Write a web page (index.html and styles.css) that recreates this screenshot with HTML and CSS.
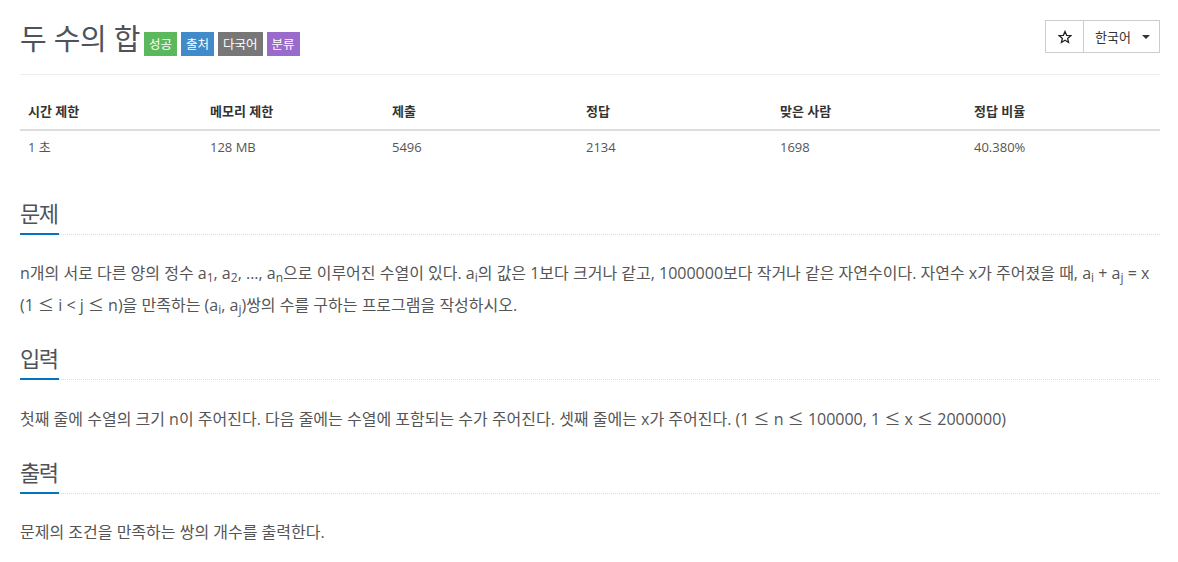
FILE: index.html
```html
<!DOCTYPE html>
<html lang="ko">
<head>
<meta charset="utf-8">
<title>두 수의 합</title>
<link rel="stylesheet" href="styles.css">
</head>
<body>
<div class="container">
  <header class="page-header">
    <div class="title-wrap">
      <h1 class="title">두 수의 합</h1>
      <div class="labels">
        <span class="label label-success">성공</span>
        <span class="label label-info">출처</span>
        <span class="label label-gray">다국어</span>
        <span class="label label-purple">분류</span>
      </div>
    </div>
    <div class="btn-group">
      <button class="btn btn-star" type="button" aria-label="즐겨찾기">
        <svg width="14" height="14" viewBox="0 0 24 24" aria-hidden="true"><path d="M12 2.5l2.8 6.6 7.1.6-5.4 4.7 1.6 7-6.1-3.7-6.1 3.7 1.6-7-5.4-4.7 7.1-.6z" fill="none" stroke="#222" stroke-width="2.2" stroke-linejoin="miter"/></svg>
      </button>
      <button class="btn btn-lang" type="button">한국어 <span class="caret"></span></button>
    </div>
  </header>

  <table class="info-table">
    <thead>
      <tr>
        <th class="col-narrow">시간 제한</th>
        <th class="col-narrow">메모리 제한</th>
        <th>제출</th>
        <th>정답</th>
        <th>맞은 사람</th>
        <th>정답 비율</th>
      </tr>
    </thead>
    <tbody>
      <tr>
        <td>1 초</td>
        <td>128 MB</td>
        <td>5496</td>
        <td>2134</td>
        <td>1698</td>
        <td>40.380%</td>
      </tr>
    </tbody>
  </table>

  <section class="section">
    <h2 class="headline"><span>문제</span></h2>
    <p class="text">n개의 서로 다른 양의 정수 a<sub>1</sub>, a<sub>2</sub>, ..., a<sub>n</sub>으로 이루어진 수열이 있다. a<sub>i</sub>의 값은 1보다 크거나 같고, 1000000보다 작거나 같은 자연수이다. 자연수 x가 주어졌을 때, a<sub>i</sub> + a<sub>j</sub> = x <span class="nowrap">(1 <span class="le">≤</span> i &lt; j <span class="le">≤</span> n)을</span> 만족하는 (a<sub>i</sub>, a<sub>j</sub>)쌍의 수를 구하는 프로그램을 작성하시오.</p>
  </section>

  <section class="section">
    <h2 class="headline"><span>입력</span></h2>
    <p class="text">첫째 줄에 수열의 크기 n이 주어진다. 다음 줄에는 수열에 포함되는 수가 주어진다. 셋째 줄에는 x가 주어진다. (1 <span class="le">≤</span> n <span class="le">≤</span> 100000, 1 <span class="le">≤</span> x <span class="le">≤</span> 2000000)</p>
  </section>

  <section class="section">
    <h2 class="headline"><span>출력</span></h2>
    <p class="text">문제의 조건을 만족하는 쌍의 개수를 출력한다.</p>
  </section>
</div>
</body>
</html>
```

FILE: styles.css
```css
* {
  box-sizing: border-box;
}

body {
  margin: 0;
  background: #fff;
  color: #555;
  font-family: "Open Sans", "Noto Sans CJK KR", sans-serif;
  font-size: 13px;
}

.container {
  padding: 0 18px 0 20px;
}

.page-header {
  display: flex;
  justify-content: space-between;
  align-items: flex-start;
  padding-top: 20px;
  height: 75px;
  border-bottom: 1px solid #eee;
}

.title-wrap {
  display: flex;
  align-items: flex-start;
}

.title {
  margin: 0;
  font-family: "Noto Sans CJK KR", "Open Sans", sans-serif;
  font-weight: 400;
  font-size: 29px;
  line-height: 34px;
  color: #4f5359;
  letter-spacing: -0.5px;
}

.labels {
  display: flex;
  gap: 4px;
  margin-left: 4px;
  margin-top: 12px;
}

.label {
  display: inline-block;
  height: 24px;
  line-height: 24px;
  padding: 0 5px;
  font-family: "Noto Sans CJK KR", sans-serif;
  font-size: 12.5px;
  color: #fff;
}

.label-success { background: #5cb85c; }
.label-info { background: #428bca; }
.label-gray { background: #777; }
.label-purple { background: #9b6bcc; }

.btn-group {
  display: flex;
}

.btn {
  height: 33px;
  margin: 0;
  border: 1px solid #ccc;
  background: #fff;
  color: #333;
  font-family: "Noto Sans CJK KR", "DejaVu Sans", sans-serif;
  font-size: 13px;
  display: flex;
  align-items: center;
  justify-content: center;
  padding: 0;
}

.btn-star {
  width: 39px;
}

.btn-lang {
  width: 76px;
  border-left: 0;
  gap: 11px;
  padding-left: 2px;
}

.caret {
  width: 0;
  height: 0;
  border-top: 4px solid #333;
  border-left: 4px solid transparent;
  border-right: 4px solid transparent;
}

.info-table {
  width: 100%;
  margin-top: 18px;
  border-collapse: collapse;
  table-layout: fixed;
}

.info-table th,
.info-table td {
  text-align: left;
  padding: 8px;
  line-height: 20px;
  font-size: 13px;
}

.info-table th {
  color: #333;
  font-weight: 700;
  border-bottom: 2px solid #ddd;
  width: 194px;
}

.info-table th.col-narrow {
  width: 182px;
}

.info-table td {
  color: #555;
  padding-top: 6px;
}

.section {
  margin-top: 32px;
}

.section + .section {
  margin-top: 21px;
}

.headline {
  margin: 0;
  font-family: "Noto Sans CJK KR", sans-serif;
  font-weight: 400;
  font-size: 22px;
  line-height: 30px;
  color: #4f5359;
  border-bottom: 1px dotted #dcdcdc;
  display: flex;
}

.headline span {
  display: inline-block;
  padding-bottom: 6px;
  border-bottom: 2px solid #0076c0;
  margin-bottom: -1px;
  letter-spacing: -1.5px;
  padding-right: 2px;
}

.text {
  margin: 23px 0 0;
  font-size: 16px;
  line-height: 31px;
  color: #555;
}

.nowrap {
  white-space: nowrap;
}

.le {
  font-family: "Noto Sans CJK KR", sans-serif;
  font-size: 16px;
}

sub {
  font-size: 75%;
  line-height: 0;
  vertical-align: -0.25em;
}
```
